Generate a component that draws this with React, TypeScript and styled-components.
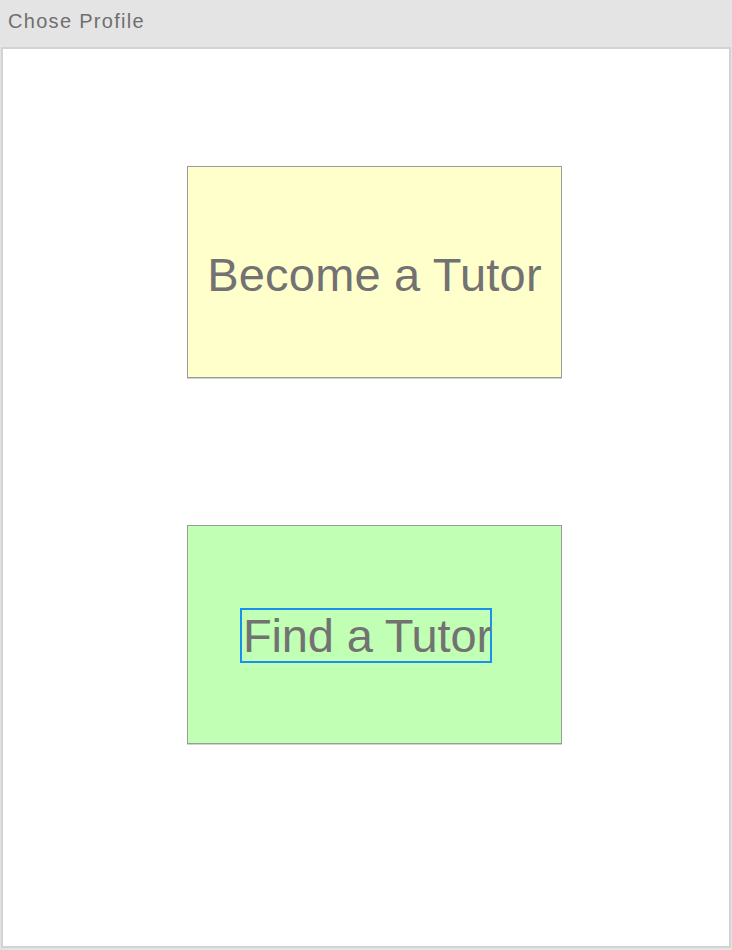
import React from "react";
import styled, { createGlobalStyle } from "styled-components";

const Global = createGlobalStyle`
  html, body { margin: 0; padding: 0; background: #e4e4e4; }
  body { font-family: "Liberation Sans", Arial, sans-serif; }
`;

const Screen = styled.div`
  width: 732px;
  height: 950px;
  display: flex;
  flex-direction: column;
  background: #e4e4e4;
`;

const Header = styled.div`
  height: 47px;
  flex: none;
  display: flex;
  align-items: center;
  padding: 0 0 5px 8px;
  box-sizing: border-box;
  font-size: 20px;
  letter-spacing: 1.3px;
  color: #6f6f6f;
`;

const Panel = styled.div`
  flex: 1;
  margin: 0 1px 2px 1px;
  background: #ffffff;
  border: 2px solid #d3d3d3;
  display: flex;
  flex-direction: column;
  align-items: flex-start;
  padding: 117px 0 0 184px;
`;

const Card = styled.div<{ $bg: string; $h: number; $align: string }>`
  width: 375px;
  height: ${(p) => p.$h}px;
  box-sizing: border-box;
  background: ${(p) => p.$bg};
  border: 1px solid #9a9a9a;
  box-shadow: 0 1px 0 #d2d2d2;
  display: flex;
  align-items: center;
  justify-content: ${(p) => p.$align};
  padding-left: ${(p) => (p.$align === "flex-start" ? "52px" : "0")};
  padding-top: ${(p) => (p.$align === "flex-start" ? "2px" : "4px")};
`;

const Gap = styled.div`
  height: 147px;
  flex: none;
`;

const Title = styled.span`
  font-size: 47px;
  letter-spacing: 0.2px;
  color: #727272;
  line-height: 1;
`;

const Selected = styled.span`
  font-size: 47px;
  letter-spacing: -0.15px;
  color: #727272;
  line-height: 51px;
  border: 2px solid #1a8fef;
  padding: 0 0 0 1px;
  width: 247px;
  white-space: nowrap;
  overflow: visible;
`;

export default function App() {
  return (
    <>
      <Global />
      <Screen>
        <Header>Chose Profile</Header>
        <Panel>
          <Card $bg="#ffffcc" $h={212} $align="center">
            <Title>Become a Tutor</Title>
          </Card>
          <Gap />
          <Card $bg="#c0ffb4" $h={219} $align="flex-start">
            <Selected>Find a Tutor</Selected>
          </Card>
        </Panel>
      </Screen>
    </>
  );
}
